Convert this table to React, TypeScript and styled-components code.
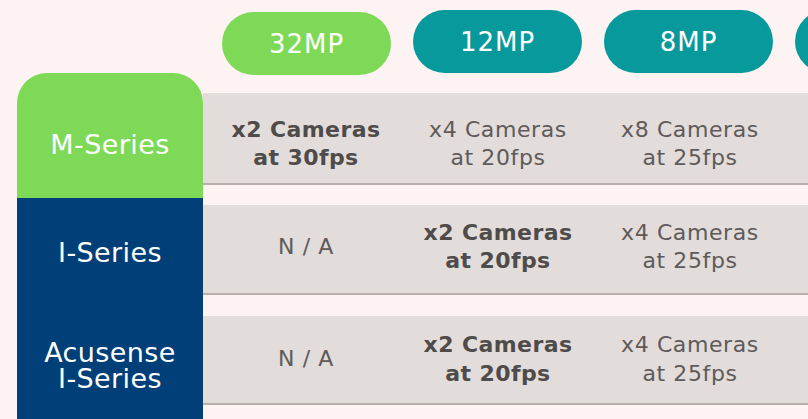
import styled, { createGlobalStyle, css } from "styled-components";

const Colors = {
  page: "#fdf3f2",
  band: "#e2dcda",
  bandLine: "#b8afad",
  green: "#7ed957",
  teal: "#08999c",
  navy: "#003f78",
  text: "#5e5a59",
  textStrong: "#4f4b4a",
  white: "#ffffff",
};

type Tone = "green" | "teal" | "navy";

const GlobalStyle = createGlobalStyle`
  html, body {
    margin: 0;
    padding: 0;
    background: ${Colors.page};
  }
  body {
    font-family: "DejaVu Sans", "Liberation Sans", sans-serif;
  }
  #root {
    width: 808px;
    height: 419px;
    overflow: hidden;
  }
`;

const Page = styled.div`
  width: 808px;
  height: 419px;
  overflow: hidden;
  display: flex;
  flex-direction: column;
  background: ${Colors.page};
`;

const Header = styled.div`
  display: flex;
  align-items: flex-start;
  flex-shrink: 0;
  height: 73px;
  padding: 10px 0 0 222px;
  column-gap: 22px;
  box-sizing: border-box;
`;

const Pill = styled.div<{ $tone: Tone; $active?: boolean }>`
  display: flex;
  align-items: center;
  justify-content: center;
  flex-shrink: 0;
  width: 169px;
  height: 63px;
  border-radius: 32px;
  background: ${({ $tone }) => Colors[$tone]};
  color: ${Colors.white};
  font-size: 26px;
  letter-spacing: 1px;
  ${({ $active }) =>
    $active &&
    css`
      margin-top: 2px;
    `}
`;

const Body = styled.div`
  display: flex;
  flex-direction: column;
`;

const Row = styled.div<{ $height: number }>`
  display: flex;
  height: ${({ $height }) => $height}px;
`;

const padFor = (shift: number) =>
  shift >= 0
    ? css`
        padding-top: ${shift}px;
      `
    : css`
        padding-bottom: ${-shift}px;
      `;

const Label = styled.div<{ $tone: Tone; $rounded?: boolean; $shift: number }>`
  display: flex;
  align-items: center;
  justify-content: center;
  flex-shrink: 0;
  width: 186px;
  margin-left: 17px;
  box-sizing: border-box;
  background: ${({ $tone }) => Colors[$tone]};
  color: ${Colors.white};
  text-align: center;
  border-radius: ${({ $rounded }) => ($rounded ? "30px 30px 0 0" : "0")};
  ${({ $shift }) => padFor($shift)}
`;

const LabelText = styled.span`
  display: block;
  font-size: 27px;
  line-height: 26px;
  letter-spacing: 0.4px;
  white-space: pre-line;
`;

const Band = styled.div<{ $top: number; $height: number; $shift: number }>`
  display: flex;
  align-items: stretch;
  flex: 1;
  margin-top: ${({ $top }) => $top}px;
  height: ${({ $height }) => $height}px;
  padding-left: 7px;
  box-sizing: border-box;
  background: ${Colors.band};
  border-bottom: 2px solid ${Colors.bandLine};
  ${({ $shift }) => padFor($shift)}
`;

const Cell = styled.div`
  display: flex;
  flex-direction: column;
  align-items: center;
  justify-content: center;
  flex-shrink: 0;
  width: 192px;
  text-align: center;
`;

const Line = styled.span<{ $strong?: boolean }>`
  display: block;
  white-space: nowrap;
  font-size: 22px;
  line-height: 28.5px;
  color: ${({ $strong }) => ($strong ? Colors.textStrong : Colors.text)};
  font-weight: ${({ $strong }) => ($strong ? 700 : 400)};
  letter-spacing: ${({ $strong }) => ($strong ? "0.4px" : "0.6px")};
`;

const pills: { label: string; tone: Tone; active?: boolean }[] = [
  { label: "32MP", tone: "green", active: true },
  { label: "12MP", tone: "teal" },
  { label: "8MP", tone: "teal" },
  { label: "", tone: "teal" },
];

interface CellData {
  lines: string[];
  strong?: boolean;
}

interface RowData {
  label: string;
  tone: Tone;
  rounded?: boolean;
  height: number;
  labelShift: number;
  bandTop: number;
  bandHeight: number;
  bandShift: number;
  cells: CellData[];
}

const iSeriesCells: CellData[] = [
  { lines: ["N / A"] },
  { lines: ["x2 Cameras", "at 20fps"], strong: true },
  { lines: ["x4 Cameras", "at 25fps"] },
];

const rows: RowData[] = [
  {
    label: "M-Series",
    tone: "green",
    rounded: true,
    height: 125,
    labelShift: 18,
    bandTop: 20,
    bandHeight: 92,
    bandShift: 12,
    cells: [
      { lines: ["x2 Cameras", "at 30fps"], strong: true },
      { lines: ["x4 Cameras", "at 20fps"] },
      { lines: ["x8 Cameras", "at 25fps"] },
    ],
  },
  {
    label: "I-Series",
    tone: "navy",
    height: 111,
    labelShift: -2,
    bandTop: 7,
    bandHeight: 90,
    bandShift: -4,
    cells: iSeriesCells,
  },
  {
    label: "Acusense\nI-Series",
    tone: "navy",
    height: 110,
    labelShift: 3,
    bandTop: 7,
    bandHeight: 89,
    bandShift: 0,
    cells: iSeriesCells,
  },
];

export default function App() {
  return (
    <>
      <GlobalStyle />
      <Page>
        <Header>
          {pills.map((p, i) => (
            <Pill key={i} $tone={p.tone} $active={p.active}>
              {p.label}
            </Pill>
          ))}
        </Header>
        <Body>
          {rows.map((row) => (
            <Row key={row.label} $height={row.height}>
              <Label
                $tone={row.tone}
                $rounded={row.rounded}
                $shift={row.labelShift}
              >
                <LabelText>{row.label}</LabelText>
              </Label>
              <Band
                $top={row.bandTop}
                $height={row.bandHeight}
                $shift={row.bandShift}
              >
                {row.cells.map((cell, i) => (
                  <Cell key={i}>
                    {cell.lines.map((line) => (
                      <Line key={line} $strong={cell.strong}>
                        {line}
                      </Line>
                    ))}
                  </Cell>
                ))}
              </Band>
            </Row>
          ))}
        </Body>
      </Page>
    </>
  );
}
